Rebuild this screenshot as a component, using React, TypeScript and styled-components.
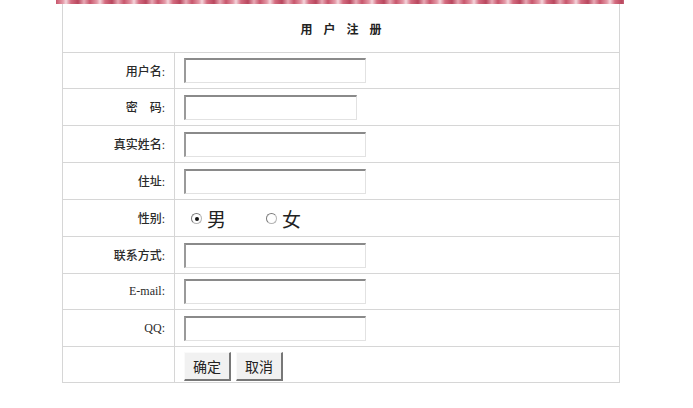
import React from 'react';
import styled, { createGlobalStyle } from 'styled-components';

const GlobalStyle = createGlobalStyle`
  html, body {
    margin: 0;
    padding: 0;
    background: #fff;
  }
  body {
    font-family: "Liberation Serif", "Noto Sans CJK SC", serif;
    font-size: 12px;
    color: #333;
  }
`;

const Page = styled.div`
  width: 568px;
  margin-left: 56px;
`;

const Stripe = styled.div`
  height: 4px;
  background: repeating-linear-gradient(
    90deg,
    #c8566c 0px,
    #e49aa8 7px,
    #f4d6dc 10px,
    #d46c80 15px,
    #b9475e 22px,
    #e7a9b5 28px,
    #c8566c 34px
  );
`;

const Table = styled.table`
  width: 558px;
  margin: 0 4px 0 6px;
  border-collapse: collapse;
  border: 1px solid #d6d6d6;
  border-top: none;
`;

const HeadCell = styled.td`
  height: 48px;
  padding: 0 0 0 11px;
  text-align: center;
  font-family: "Noto Sans CJK SC", sans-serif;
  font-weight: 700;
  font-size: 12px;
  letter-spacing: 11px;
  color: #222;
  border-bottom: 1px solid #d6d6d6;
`;

const Row = styled.tr<{ $h: number }>`
  height: ${(p) => p.$h}px;
  td {
    border-bottom: 1px solid #d6d6d6;
  }
  &:last-child td {
    border-bottom: none;
  }
`;

const Label = styled.td`
  width: 102px;
  padding: 0 9px 0 0;
  text-align: right;
  font-size: 12px;
  font-weight: 500;
  color: #2a2a2a;
  border-right: 1px solid #d6d6d6;
  white-space: nowrap;
`;

const Field = styled.td`
  padding: 0 0 0 9px;
`;

const TextInput = styled.input<{ $w?: number }>`
  display: block;
  box-sizing: border-box;
  width: ${(p) => p.$w ?? 182}px;
  height: 25px;
  margin: 0;
  padding: 0 3px;
  border-style: solid;
  border-width: 2px 1px 1px 2px;
  border-color: #8a8a8a #e2e2e2 #e2e2e2 #9a9a9a;
  background: #fff;
  outline: none;
`;

const Gender = styled.div`
  display: flex;
  align-items: center;
  padding-left: 7px;
  font-family: "Noto Sans CJK SC", sans-serif;
  font-size: 19px;
  color: #222;
`;

const Option = styled.label`
  display: flex;
  align-items: center;
  gap: 5px;
  margin-right: 40px;
`;

const Radio = styled.input`
  appearance: none;
  width: 11px;
  height: 11px;
  margin: 1px 0 0 0;
  border-radius: 50%;
  border: 1px solid #b4b4b4;
  border-left-color: #7a7a7a;
  border-top-color: #7a7a7a;
  background: #fff;
  position: relative;
  &:checked::after {
    content: '';
    position: absolute;
    left: 2.5px;
    top: 2.5px;
    width: 4px;
    height: 4px;
    border-radius: 50%;
    background: #111;
  }
`;

const Buttons = styled.div`
  display: flex;
  gap: 5px;
  padding-top: 3px;
`;

const Button = styled.button`
  box-sizing: border-box;
  height: 29px;
  padding: 0 8px;
  font-family: "Noto Sans CJK SC", sans-serif;
  font-size: 14px;
  color: #222;
  background: #f1f1f1;
  border-style: solid;
  border-width: 1px 2px 2px 1px;
  border-color: #fafafa #777 #777 #fafafa;
  cursor: pointer;
`;

const fields: { label: string; h: number; width?: number }[] = [
  { label: '用户名:', h: 36 },
  { label: '密\u3000码:', h: 37, width: 173 },
  { label: '真实姓名:', h: 37 },
  { label: '住址:', h: 37 },
];

const fieldsAfter: { label: string; h: number }[] = [
  { label: '联系方式:', h: 37 },
  { label: 'E-mail:', h: 36 },
  { label: 'QQ:', h: 37 },
];

export default function App() {
  return (
    <Page>
      <GlobalStyle />
      <Stripe />
      <Table>
        <tbody>
          <tr>
            <HeadCell colSpan={2}>用户注册</HeadCell>
          </tr>
          {fields.map((f) => (
            <Row key={f.label} $h={f.h}>
              <Label>{f.label}</Label>
              <Field>
                <TextInput type="text" $w={f.width} />
              </Field>
            </Row>
          ))}
          <Row $h={37}>
            <Label>性别:</Label>
            <Field>
              <Gender>
                <Option>
                  <Radio type="radio" name="sex" defaultChecked />男
                </Option>
                <Option>
                  <Radio type="radio" name="sex" />女
                </Option>
              </Gender>
            </Field>
          </Row>
          {fieldsAfter.map((f) => (
            <Row key={f.label} $h={f.h}>
              <Label>{f.label}</Label>
              <Field>
                <TextInput type="text" />
              </Field>
            </Row>
          ))}
          <Row $h={36}>
            <Label />
            <Field>
              <Buttons>
                <Button>确定</Button>
                <Button>取消</Button>
              </Buttons>
            </Field>
          </Row>
        </tbody>
      </Table>
    </Page>
  );
}
